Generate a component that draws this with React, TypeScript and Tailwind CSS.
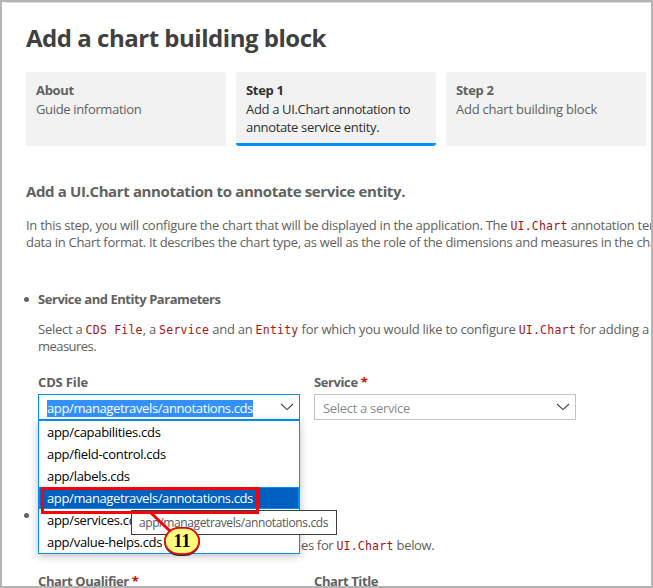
import type { ReactNode } from "react";

function Code({ children }: { children: ReactNode }) {
  return (
    <code className="font-['DejaVu_Sans_Mono',monospace] text-[11.5px] leading-none tracking-[0.22px] text-[#a31515]">
      {children}
    </code>
  );
}

function StepCard({ title, lines, active }: { title: string; lines: string[]; active?: boolean }) {
  return (
    <div
      className={
        active
          ? "flex h-[74px] w-[200px] shrink-0 flex-col overflow-hidden rounded-[3px] bg-[#f2f2f2] pt-[9px] text-[#303030]"
          : "flex h-[74px] w-[200px] shrink-0 flex-col overflow-hidden rounded-[3px] bg-[#f2f2f2] pt-[9px] text-[#616161]"
      }
    >
      <div className="mb-px pl-2.5 leading-[18px] font-bold tracking-[-0.32px]">{title}</div>
      {lines.map((line) => (
        <div
          key={line}
          className={
            line.startsWith("Add chart")
              ? "pl-2.5 leading-[18px] tracking-[-0.23px]"
              : "pl-2.5 leading-[18px] tracking-[-0.34px]"
          }
        >
          {line}
        </div>
      ))}
      {active && <div className="mt-auto h-[3px] shrink-0 bg-[#0090f1]" />}
    </div>
  );
}

function Bullet() {
  return <span className="mt-[7px] mr-[9px] h-[5px] w-[5px] shrink-0 rounded-full bg-[#616161]" />;
}

function Label({ children, required }: { children: string; required?: boolean }) {
  return (
    <div className="h-[18px] leading-[18px] font-bold tracking-[-0.4px]">
      {children}
      {required && <span className="text-[#be1100]"> *</span>}
    </div>
  );
}

function Chevron() {
  return (
    <svg width="14" height="8" viewBox="0 0 14 8" fill="none" stroke="#424242" strokeWidth="1.1">
      <path d="M1 1l6 5.6L13 1" />
    </svg>
  );
}

const files = [
  "app/capabilities.cds",
  "app/field-control.cds",
  "app/labels.cds",
  "app/managetravels/annotations.cds",
  "app/services.cds",
  "app/value-helps.cds",
];

function FileDropdown() {
  return (
    <ul className="absolute top-[26px] left-0 z-10 w-[262px] border border-[#0090f1] bg-white text-black shadow-[0_2px_8px_rgba(0,0,0,0.25)]">
      {files.map((file, i) => (
        <li
          key={file}
          className={
            i === 3
              ? "h-[22px] border border-[#0090f1] bg-[#0060c0] pl-[7px] leading-[20px] tracking-[-0.38px] text-white"
              : "h-[22px] pl-2 leading-[22px] tracking-[-0.3px]"
          }
        >
          {file}
        </li>
      ))}
    </ul>
  );
}

function Callout() {
  return (
    <>
      <div className="absolute top-[510px] left-[131px] z-20 h-[25px] w-[206px] border border-[#3c3c3c] bg-white pl-[7px] text-[12px] leading-[24px] tracking-[-0.38px] text-[#575757]">
        app/managetravels/annotations.cds
      </div>
      <div className="absolute top-[487px] left-[41px] z-30 h-[27px] w-[218px] border-3 border-[#fb0007]" />
      <svg className="absolute top-[510px] left-[145px] z-30" width="60" height="50" viewBox="0 0 60 50">
        <path d="M6 3L26 22" stroke="#fb0007" strokeWidth="3" />
        <rect x="20.5" y="18.5" width="33" height="26" rx="14" ry="13" fill="#ffff80" stroke="#303030" strokeWidth="3" />
        <rect x="20" y="18" width="34" height="26" rx="14" ry="13" fill="#ffff80" stroke="#fb0007" strokeWidth="1.6" />
      </svg>
      <div className="absolute top-[531px] left-[165px] z-40 w-[34px] text-center font-['Liberation_Serif',serif] text-[18px] leading-[20px] font-bold text-black">
        11
      </div>
    </>
  );
}

export default function App() {
  return (
    <div className="relative h-[588px] w-[653px] overflow-hidden bg-white font-['Open_Sans',sans-serif] text-[13px] whitespace-nowrap text-[#616161]">
      <div className="pt-[22px] pl-[26px]">
        <h1 className="h-8 text-[24px] leading-8 font-bold tracking-[-0.475px] text-[#404040]">
          Add a chart building block
        </h1>

        <div className="mt-[18px] flex gap-2.5">
          <StepCard title="About" lines={["Guide information"]} />
          <StepCard title="Step 1" active lines={["Add a UI.Chart annotation to", "annotate service entity."]} />
          <StepCard title="Step 2" lines={["Add chart building block"]} />
        </div>

        <h2 className="mt-[35px] h-5 text-[15px] leading-5 font-bold tracking-[-0.37px]">
          Add a UI.Chart annotation to annotate service entity.
        </h2>
        <p className="mt-4 h-[34px] leading-[17px] tracking-[-0.275px]">
          In this step, you will configure the chart that will be displayed in the application. The{" "}
          <Code>UI.Chart</Code> annotation term
          <br />
          <span className="tracking-[-0.315px]">
            data in Chart format. It describes the chart type, as well as the role of the dimensions and measures in the
            chart.
          </span>
        </p>
      </div>

      <div className="mt-[39px] flex pl-6">
        <Bullet />
        <div>
          <h3 className="h-[18px] leading-[18px] font-bold tracking-[-0.45px]">Service and Entity Parameters</h3>
          <p className="mt-[13px] h-[34px] leading-[17px] tracking-[-0.25px]">
            Select a <Code>CDS File</Code>, a <Code>Service</Code> and an <Code>Entity</Code> for which you would like
            to configure <Code>UI.Chart</Code> for adding a
            <br />
            <span className="tracking-[-0.55px]">measures.</span>
          </p>
          <div className="mt-[18px] flex gap-[14px]">
            <div className="w-[262px]">
              <div className="h-[18px] leading-[18px] font-bold tracking-[-0.15px]">CDS File</div>
              <div className="relative mt-[3px]">
                <div className="flex h-[26px] items-center justify-between border border-[#0090f1] pr-[5px] pl-2">
                  <span className="mt-0.5 h-[17px] bg-[#3390ff] leading-[17px] tracking-[-0.38px] text-white">
                    app/managetravels/annotations.cds
                  </span>
                  <Chevron />
                </div>
                <FileDropdown />
              </div>
            </div>
            <div className="w-[262px]">
              <Label required>Service</Label>
              <div className="mt-[3px] flex h-[26px] items-center justify-between border border-[#c2c2c2] pr-[5px] pl-2">
                <span className="mt-0.5 leading-[17px] tracking-[-0.31px] text-[#8a8a8a]">Select a service</span>
                <Chevron />
              </div>
            </div>
          </div>
        </div>
      </div>

      <div className="mt-[86px] flex pl-6">
        <Bullet />
        <div className="pt-[31px]">
          <p className="h-[17px] pl-[263px] leading-[17px] tracking-[-0.34px]">
            es for <Code>UI.Chart</Code> below.
          </p>
          <div className="mt-[18px] flex gap-[14px]">
            <div className="w-[262px]">
              <Label required>Chart Qualifier</Label>
            </div>
            <div className="w-[262px]">
              <Label>Chart Title</Label>
            </div>
          </div>
        </div>
      </div>

      <Callout />
      <div className="absolute top-0.5 right-0 left-1.5 h-px bg-[#dcdcdc]" />
      <div className="pointer-events-none absolute inset-0 z-50 border-2 border-[#b4b4b4]" />
    </div>
  );
}
